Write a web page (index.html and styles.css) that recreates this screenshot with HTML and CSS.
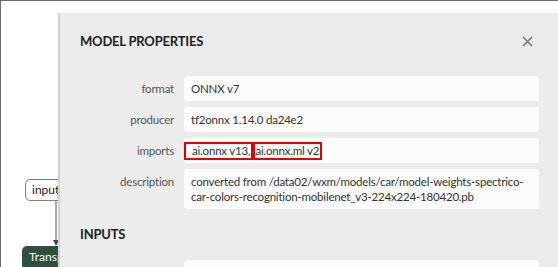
FILE: index.html
```html
<!DOCTYPE html>
<html lang="en">
<head>
    <meta charset="UTF-8">
    <title>Model Properties</title>
    <link rel="stylesheet" href="styles.css">
</head>
<body>
    <div class="window">
        <div class="graph">
            <div class="node node-input">input_1</div>
            <svg class="edge" width="10" height="46" viewBox="0 0 10 46">
                <line x1="5" y1="0" x2="5" y2="40" stroke="#555" stroke-width="1"/>
                <polygon points="2,39 8,39 5,45" fill="#444"/>
            </svg>
            <div class="node node-op">Transpose</div>
        </div>
        <div class="sidebar">
            <div class="sidebar-header">
                <span class="sidebar-title">MODEL PROPERTIES</span>
                <svg class="close" width="11" height="11" viewBox="0 0 11 11">
                    <path d="M1 1 L10 10 M10 1 L1 10" stroke="#777" stroke-width="1.6" fill="none"/>
                </svg>
            </div>
            <div class="props">
                <div class="prop-name">format</div>
                <div class="prop-value">ONNX v7</div>
                <div class="prop-name">producer</div>
                <div class="prop-value">tf2onnx 1.14.0 da24e2</div>
                <div class="prop-name">imports</div>
                <div class="prop-value imports">
                    <span class="import first">ai.onnx v13,</span><span class="import">ai.onnx.ml v2</span>
                </div>
                <div class="prop-name">description</div>
                <div class="prop-value">converted from /data02/wxm/models/car/model-weights-spectrico-car-colors-recognition-mobilenet_v3-224x224-180420.pb</div>
            </div>
            <div class="section-title">INPUTS</div>
            <div class="props">
                <div class="prop-name"></div>
                <div class="prop-value">&nbsp;</div>
            </div>
        </div>
    </div>
</body>
</html>
```

FILE: styles.css
```css
body {
    margin: 0;
    font-family: Lato, "Open Sans", sans-serif;
    font-size: 11.5px;
    letter-spacing: -0.2px;
    color: #333;
    background: #fff;
    overflow: hidden;
}
.window {
    display: flex;
    height: 267px;
    box-sizing: border-box;
    border-top: 1px solid #6a6a6a;
    border-left: 1px solid #6a6a6a;
    overflow: hidden;
}
.graph {
    position: relative;
    width: 57px;
    flex-shrink: 0;
    overflow: hidden;
}
.node {
    position: absolute;
    white-space: nowrap;
    font-size: 12px;
    letter-spacing: 0;
    line-height: 20px;
    padding: 0 6px;
}
.node-input {
    left: 24px;
    top: 178px;
    height: 20px;
    border: 1px solid #808080;
    border-radius: 5px;
    background: #fcfcfc;
    color: #222;
}
.edge {
    position: absolute;
    left: 50px;
    top: 200px;
}
.node-op {
    left: 21px;
    top: 245px;
    height: 24px;
    line-height: 22px;
    padding: 0 7px;
    border-radius: 5px;
    background: #2e4f3d;
    color: #fff;
}
.sidebar {
    flex: 1;
    margin-top: 12px;
    background: #ececec;
    border-left: 2px solid #d2d2d2;
    padding: 0 19px 0 20px;
    overflow: hidden;
}
.sidebar-header {
    display: flex;
    justify-content: space-between;
    align-items: center;
    padding-top: 20px;
    height: 16px;
    margin-bottom: 27px;
}
.sidebar-title, .section-title {
    font-size: 13px;
    font-weight: 700;
    color: #222;
    letter-spacing: -0.2px;
    line-height: 16px;
}
.close {
    margin-right: 6px;
}
.props {
    display: grid;
    grid-template-columns: 94px 1fr;
    column-gap: 10px;
    row-gap: 6px;
}
.prop-name {
    text-align: right;
    padding-top: 5px;
    line-height: 15px;
    color: #555;
}
.prop-value {
    background: #fcfcfc;
    border-radius: 3px;
    padding: 5px 7px;
    line-height: 15px;
    color: #333;
}
.imports {
    display: flex;
    align-items: center;
    padding: 0;
    height: 25px;
}
.import {
    border: 2px solid #e00000;
    line-height: 14px;
    padding: 0 1px 0 0;
}
.import.first {
    padding-left: 6px;
}
.section-title {
    margin: 17px 0 18px;
}
```
